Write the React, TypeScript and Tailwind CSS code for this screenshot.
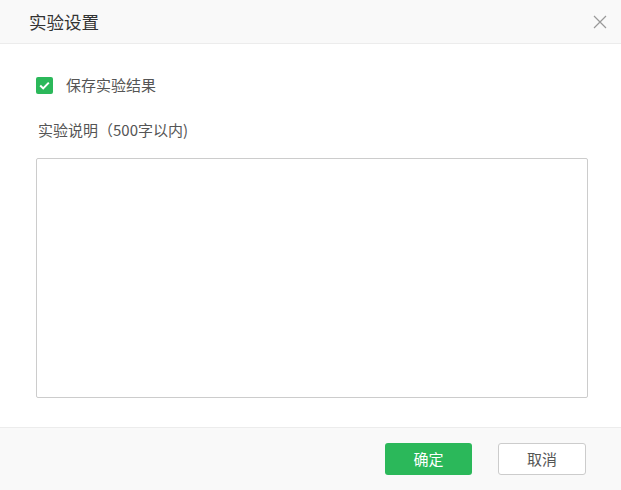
import React, { useState } from "react";

const App = () => {
  const [checked, setChecked] = useState(true);

  return (
    <div
      className="w-[621px] h-[490px] bg-white flex flex-col text-[#333]"
      style={{ fontFamily: '"Noto Sans CJK SC", "Noto Sans", sans-serif' }}
    >
      <div className="h-[44px] bg-[#f9f9f9] border-b border-[#ececec] flex items-center justify-between pl-[29px] pr-[14px]">
        <h1 className="text-[17.5px] text-[#333] leading-none">实验设置</h1>
        <button className="text-[#999]">
          <svg width="14" height="14" viewBox="0 0 14 14">
            <path d="M1 1L13 13M13 1L1 13" stroke="#999" strokeWidth="1.2" />
          </svg>
        </button>
      </div>

      <div className="flex-1 px-[36px] pt-[30px]">
        <label className="flex items-center gap-[13px] cursor-pointer">
          <span
            onClick={() => setChecked(!checked)}
            className={`w-[17px] h-[17px] rounded-[2px] flex items-center justify-center ${
              checked ? "bg-[#2bb85a]" : "border border-[#ccc] bg-white"
            }`}
          >
            {checked && (
              <svg width="11" height="9" viewBox="0 0 11 9">
                <path d="M1.2 4.5L4.2 7.4L9.8 1.6" stroke="white" strokeWidth="2" fill="none" />
              </svg>
            )}
          </span>
          <span className="text-[15px] text-[#555]">保存实验结果</span>
        </label>

        <p className="mt-[22px] ml-[2px] text-[15px] text-[#555]">实验说明（500字以内)</p>

        <textarea className="mt-[17px] block w-[552px] h-[240px] border border-[#ccc] rounded-[2px] resize-none outline-none p-2 text-[14px]" />
      </div>

      <div className="h-[63px] bg-[#f9f9f9] border-t border-[#ececec] flex items-center justify-end gap-[26px] pr-[35px]">
        <button className="w-[87px] h-[32px] rounded-[3px] bg-[#2bb85a] text-white text-[15px]">确定</button>
        <button className="w-[88px] h-[32px] rounded-[3px] bg-white border border-[#ccc] text-[#555] text-[15px]">取消</button>
      </div>
    </div>
  );
};

export default App;
